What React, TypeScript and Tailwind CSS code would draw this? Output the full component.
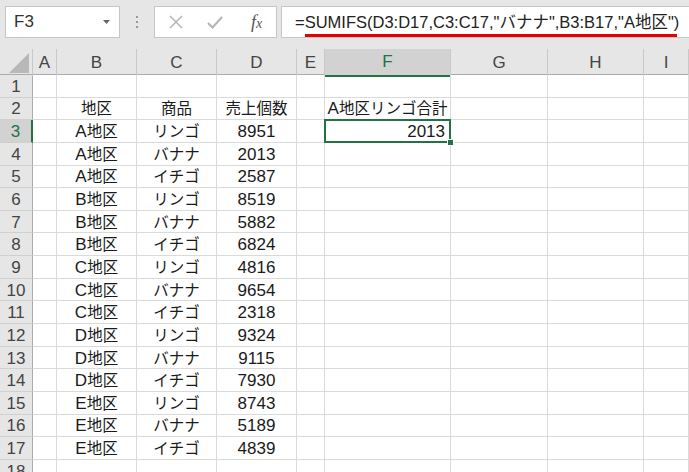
import React from "react";

const ROWS: [string, string, number][] = [
  ["A地区", "リンゴ", 8951],
  ["A地区", "バナナ", 2013],
  ["A地区", "イチゴ", 2587],
  ["B地区", "リンゴ", 8519],
  ["B地区", "バナナ", 5882],
  ["B地区", "イチゴ", 6824],
  ["C地区", "リンゴ", 4816],
  ["C地区", "バナナ", 9654],
  ["C地区", "イチゴ", 2318],
  ["D地区", "リンゴ", 9324],
  ["D地区", "バナナ", 9115],
  ["D地区", "イチゴ", 7930],
  ["E地区", "リンゴ", 8743],
  ["E地区", "バナナ", 5189],
  ["E地区", "イチゴ", 4839],
];

const COLS = ["A", "B", "C", "D", "E", "F", "G", "H", "I"];

const gridCols =
  "grid grid-cols-[33px_24px_80px_80px_80px_28px_126px_97px_96px_45px]";

// latin runs at 17px, japanese runs a little smaller (like the sheet font)
function MixedText({ text }: { text: string }) {
  const parts = text.match(/[A-Za-z0-9]+|[^A-Za-z0-9]+/g) ?? [];
  return (
    <>
      {parts.map((p, i) => (
        <span key={i} className={/^[A-Za-z0-9]/.test(p) ? "text-[17px]" : "text-[15.5px]"}>
          {p}
        </span>
      ))}
    </>
  );
}

function Cell({
  children,
  align = "center",
  selected = false,
}: {
  children?: string | number | null;
  align?: "center" | "right";
  selected?: boolean;
}) {
  return (
    <div
      className={`relative flex items-center border-r border-b border-[#dadada] text-[#1a1a1a] text-[17px] ${
        align === "right" ? "justify-end pr-[5px]" : "justify-center"
      } ${selected ? "z-10" : ""}`}
    >
      {children != null && (
        <span className="leading-none pt-[1px] whitespace-nowrap">
          <MixedText text={String(children)} />
        </span>
      )}
      {selected && (
        <>
          <div className="absolute -left-[1px] -top-[1px] right-[-1px] bottom-[-1px] border-2 border-[#217346]" />
          <div className="absolute right-[-4px] bottom-[-4px] w-[7px] h-[7px] bg-[#217346] border border-white" />
        </>
      )}
    </div>
  );
}

function RowHeader({ n, active = false }: { n: number; active?: boolean }) {
  return (
    <div
      className={`flex items-center justify-center border-b border-[#d0d0d0] text-[17px] ${
        active
          ? "bg-[#d2d2d2] text-[#217346] border-r-2 border-r-[#217346]"
          : "bg-[#e6e6e6] text-[#444] border-r border-r-[#ababab]"
      }`}
    >
      <span className="leading-none pt-[1px]">{n}</span>
    </div>
  );
}

export default function App() {
  const rows: React.ReactNode[][] = [];
  for (let r = 1; r <= 18; r++) {
    const d = r >= 3 && r <= 17 ? ROWS[r - 3] : null;
    rows.push([
      <Cell key="a" />,
      <Cell key="b">{r === 2 ? "地区" : d?.[0]}</Cell>,
      <Cell key="c">{r === 2 ? "商品" : d?.[1]}</Cell>,
      <Cell key="d">{r === 2 ? "売上個数" : d?.[2]}</Cell>,
      <Cell key="e" />,
      r === 3 ? (
        <Cell key="f" align="right" selected>
          2013
        </Cell>
      ) : (
        <Cell key="f">{r === 2 ? "A地区リンゴ合計" : null}</Cell>
      ),
      <Cell key="g" />,
      <Cell key="h" />,
      <Cell key="i" />,
    ]);
  }

  return (
    <div className="w-[689px] h-[472px] overflow-hidden bg-white font-['Liberation_Sans','Noto_Sans_CJK_JP',sans-serif]">
      {/* formula bar */}
      <div className="h-[49px] bg-[#e6e6e6] flex items-start pt-[6px] pl-[5px]">
        <div className="w-[115px] h-[32px] bg-white border border-[#c6c6c6] flex items-center justify-between pl-[8px] pr-[9px]">
          <span className="text-[17px] text-[#333]">F3</span>
          <svg width="7" height="4" viewBox="0 0 7 4">
            <path d="M0 0h7L3.5 4z" fill="#666" />
          </svg>
        </div>
        <div className="w-[34px] h-[32px] flex flex-col items-center justify-center gap-[3px]">
          <div className="w-[2px] h-[2px] bg-[#9a9a9a]" />
          <div className="w-[2px] h-[2px] bg-[#9a9a9a]" />
          <div className="w-[2px] h-[2px] bg-[#9a9a9a]" />
        </div>
        <div className="w-[123px] h-[32px] bg-white border border-[#c6c6c6] flex items-center pl-[14px]">
          <svg width="14" height="14" viewBox="0 0 14 14">
            <path d="M1 1l12 12M13 1L1 13" stroke="#b4b4b4" strokeWidth="1.5" />
          </svg>
          <svg width="16" height="13" viewBox="0 0 16 13" className="ml-[24px]">
            <path d="M1 7l4.5 4.5L15 1" stroke="#b4b4b4" strokeWidth="2" fill="none" />
          </svg>
          <span className="ml-[28px] font-['Liberation_Serif',serif] italic text-[18px] text-[#555] leading-none">
            f<span className="text-[14px]">x</span>
          </span>
        </div>
        <div className="relative ml-[4px] flex-1 h-[32px] bg-white border border-r-0 border-[#c6c6c6] flex items-center pl-[13px]">
          <span className="text-[16.5px] text-[#222] whitespace-nowrap">
            =SUMIFS(D3:D17,C3:C17,"バナナ",B3:B17,"A地区")
          </span>
          <div className="absolute left-[23px] top-[27px] w-[372px] h-[3px] bg-[#e60000]" />
        </div>
      </div>

      {/* column headers */}
      <div className={`${gridCols} h-[26px] bg-[#e6e6e6] border-b border-[#ababab]`}>
        <div className="relative border-r border-[#c8c8c8]">
          <svg width="20" height="20" viewBox="0 0 20 20" className="absolute right-[3px] bottom-[3px]">
            <path d="M20 0V20H0z" fill="#b8b8b8" />
          </svg>
        </div>
        {COLS.map((c) =>
          c === "F" ? (
            <div
              key={c}
              className="flex items-center justify-center bg-[#d2d2d2] text-[#217346] text-[17px] border-r border-[#c8c8c8] border-b-2 border-b-[#217346] mb-[-1px]"
            >
              {c}
            </div>
          ) : (
            <div
              key={c}
              className="flex items-center justify-center text-[#444] text-[17px] border-r border-[#c8c8c8]"
            >
              {c}
            </div>
          )
        )}
      </div>

      {/* rows */}
      {rows.map((cells, i) => (
        <div key={i} className={`${gridCols} h-[22.65px]`}>
          <RowHeader n={i + 1} active={i + 1 === 3} />
          {cells}
        </div>
      ))}
    </div>
  );
}
